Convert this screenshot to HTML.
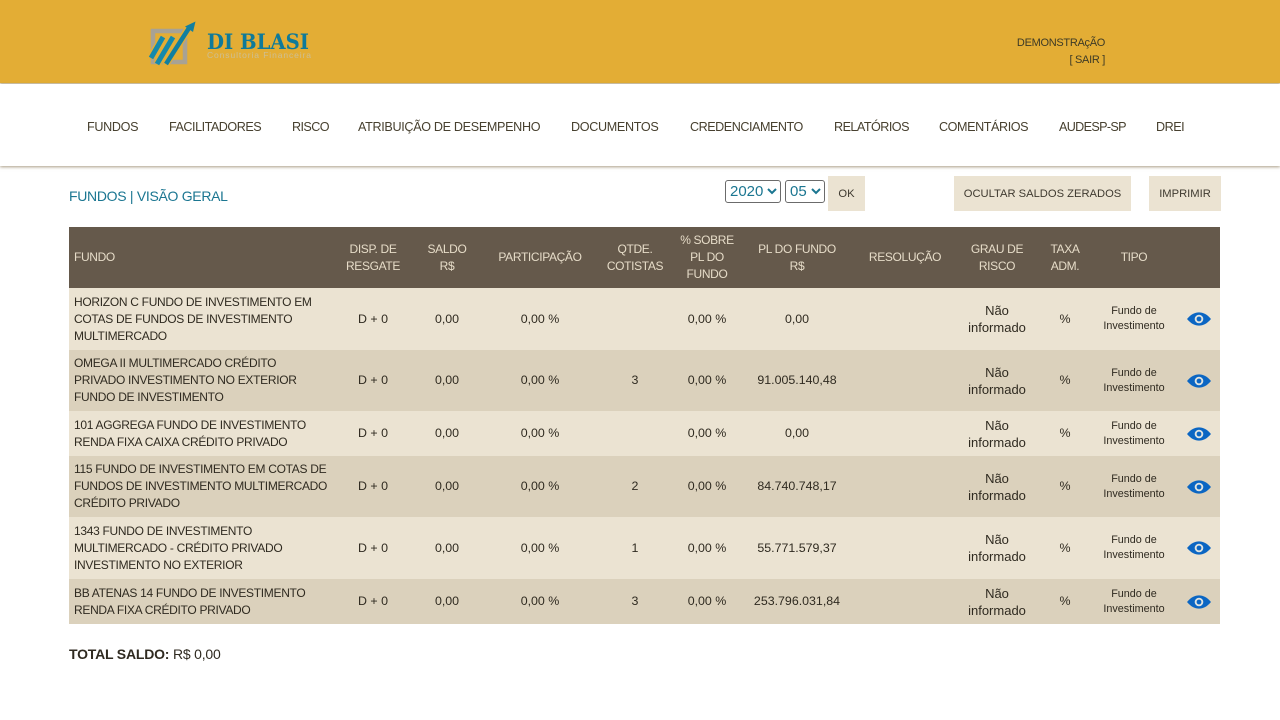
<!DOCTYPE html>
<html lang="pt-BR">
<head>
<meta charset="utf-8">
<title>Fundos</title>
<style>
html,body{margin:0;padding:0;background:#fff;width:1280px;height:720px;overflow:hidden;font-family:"Liberation Sans",sans-serif;color:#2f2a20}
#top{position:absolute;left:0;top:0;width:1280px;height:83px;background:#e3ad35;box-shadow:0 1px 2px rgba(120,90,20,.5)}
#user{position:absolute;right:175px;top:35px;text-align:right;font-size:11px;letter-spacing:-.3px;line-height:17px;color:#3d3a26}
#nav{position:absolute;left:0;top:84px;width:1280px;height:82px;background:#fff;box-shadow:0 1px 3px rgba(110,90,50,.6)}
#nav span{position:absolute;top:34px;font-size:12.6px;letter-spacing:-.33px;line-height:18px;color:#47402f;white-space:nowrap}
#title{position:absolute;left:69px;top:186px;font-size:14px;letter-spacing:-.3px;line-height:20px;color:#1b7691}
select{position:absolute;top:180px;height:23px;font-family:"Liberation Sans",sans-serif;font-size:15px;color:#1b7691;background:#fff;border:1px solid #6b6b6b;border-radius:3px;padding:0}
.btn{position:absolute;top:176px;height:35px;line-height:36px;background:#ebe3d2;color:#3f3a30;font-size:11.2px;text-align:center}
table{position:absolute;left:69px;top:227px;width:1151px;border-collapse:collapse;table-layout:fixed;font-size:12.4px;line-height:17px}
th{background:#65594b;color:#e6dcc8;font-weight:normal;height:61px;padding:0;text-align:center;font-size:12px;letter-spacing:-.35px;line-height:17px}
td{padding:0;text-align:center;color:#2f2a20;white-space:nowrap}
th:first-child,td:first-child{text-align:left;padding-left:5px}
td:first-child{font-size:12px;letter-spacing:-.3px}
tr.a td{background:#ebe3d2}
tr.b td{background:#dbd1bc}
.t{font-size:10.8px;line-height:15px}
.g{font-size:13px}
td svg{display:block;margin:0 0 0 11px}
#total{position:absolute;left:69px;top:644px;font-size:14px;letter-spacing:-.2px;line-height:20px;color:#2f2a20}
</style>
</head>
<body>
<svg width="0" height="0" style="position:absolute"><defs>
<symbol id="eye" viewBox="0 0 24 14"><path d="M0 7C4 2.2 8 .4 12 .4S20 2.2 24 7C20 11.8 16 13.6 12 13.6S4 11.8 0 7Z" fill="#0b66c3"/><circle cx="12" cy="7" r="4.3" fill="#dfe3e0"/><circle cx="12" cy="7" r="2.4" fill="#0b66c3"/></symbol>
</defs></svg>

<div id="top">
<svg style="position:absolute;left:148px;top:20px" width="170" height="46" viewBox="0 0 170 46">
<path d="M5 11H37V42H5Z" fill="none" stroke="#a8a294" stroke-width="4.5"/>
<g fill="none" stroke-linecap="butt">
<path d="M2.5 38L15 17" stroke="#e3ad35" stroke-width="7.5"/>
<path d="M9 44L25 17" stroke="#e3ad35" stroke-width="7.5"/>
<path d="M17 45L42 6" stroke="#e3ad35" stroke-width="7.5"/>
<path d="M3 38L15 17" stroke="#1489ab" stroke-width="5"/>
<path d="M9 44L25 17" stroke="#1489ab" stroke-width="5"/>
<path d="M18 44L41 8" stroke="#127f9f" stroke-width="4.5"/>
</g>
<path d="M47.5 1.5L37 6.5L45 12Z" fill="#127f9f"/>
<text x="59" y="29" font-family="'DejaVu Serif',serif" font-weight="bold" font-size="21" textLength="102" lengthAdjust="spacingAndGlyphs" fill="#0f7a99">DI BLASI</text>
<text x="59" y="38" font-family="'Liberation Sans',sans-serif" font-size="8.5" textLength="104" fill="#cdbf94">Consultoria  Financeira</text>
</svg>
<div id="user">DEMONSTRAçÃO<br>[ SAIR ]</div>
</div>

<div id="nav">
<span style="left:87px">FUNDOS</span>
<span style="left:169px;letter-spacing:-.48px">FACILITADORES</span>
<span style="left:292px;letter-spacing:-.6px">RISCO</span>
<span style="left:358px">ATRIBUIÇÃO DE DESEMPENHO</span>
<span style="left:571px">DOCUMENTOS</span>
<span style="left:690px;letter-spacing:-.47px">CREDENCIAMENTO</span>
<span style="left:834px;letter-spacing:-.53px">RELATÓRIOS</span>
<span style="left:939px;letter-spacing:-.42px">COMENTÁRIOS</span>
<span style="left:1059px;letter-spacing:-.66px">AUDESP-SP</span>
<span style="left:1156px;letter-spacing:-.5px">DREI</span>
</div>

<div id="title">FUNDOS | VISÃO GERAL</div>
<select style="left:725px;width:56px"><option>2020</option></select>
<select style="left:785px;width:40px"><option>05</option></select>
<div class="btn" style="left:828px;width:37px">OK</div>
<div class="btn" style="left:954px;width:177px">OCULTAR SALDOS ZERADOS</div>
<div class="btn" style="left:1149px;width:72px">IMPRIMIR</div>

<table>
<colgroup>
<col style="width:267px"><col style="width:74px"><col style="width:74px"><col style="width:112px"><col style="width:78px"><col style="width:66px"><col style="width:114px"><col style="width:102px"><col style="width:82px"><col style="width:54px"><col style="width:84px"><col style="width:44px">
</colgroup>
<tr><th>FUNDO</th><th>DISP. DE<br>RESGATE</th><th>SALDO<br>R$</th><th>PARTICIPAÇÃO</th><th>QTDE.<br>COTISTAS</th><th>% SOBRE<br>PL DO<br>FUNDO</th><th>PL DO FUNDO<br>R$</th><th>RESOLUÇÃO</th><th>GRAU DE<br>RISCO</th><th>TAXA<br>ADM.</th><th>TIPO</th><th></th></tr>
<tr class="a" style="height:62px"><td>HORIZON C FUNDO DE INVESTIMENTO EM<br>COTAS DE FUNDOS DE INVESTIMENTO<br>MULTIMERCADO</td><td>D + 0</td><td>0,00</td><td>0,00 %</td><td></td><td>0,00 %</td><td>0,00</td><td></td><td class="g">Não<br>informado</td><td>%</td><td class="t">Fundo de<br>Investimento</td><td><svg width="24" height="14"><use href="#eye"/></svg></td></tr>
<tr class="b" style="height:61px"><td>OMEGA II MULTIMERCADO CRÉDITO<br>PRIVADO INVESTIMENTO NO EXTERIOR<br>FUNDO DE INVESTIMENTO</td><td>D + 0</td><td>0,00</td><td>0,00 %</td><td>3</td><td>0,00 %</td><td>91.005.140,48</td><td></td><td class="g">Não<br>informado</td><td>%</td><td class="t">Fundo de<br>Investimento</td><td><svg width="24" height="14"><use href="#eye"/></svg></td></tr>
<tr class="a" style="height:45px"><td>101 AGGREGA FUNDO DE INVESTIMENTO<br>RENDA FIXA CAIXA CRÉDITO PRIVADO</td><td>D + 0</td><td>0,00</td><td>0,00 %</td><td></td><td>0,00 %</td><td>0,00</td><td></td><td class="g">Não<br>informado</td><td>%</td><td class="t">Fundo de<br>Investimento</td><td><svg width="24" height="14"><use href="#eye"/></svg></td></tr>
<tr class="b" style="height:61px"><td>115 FUNDO DE INVESTIMENTO EM COTAS DE<br>FUNDOS DE INVESTIMENTO MULTIMERCADO<br>CRÉDITO PRIVADO</td><td>D + 0</td><td>0,00</td><td>0,00 %</td><td>2</td><td>0,00 %</td><td>84.740.748,17</td><td></td><td class="g">Não<br>informado</td><td>%</td><td class="t">Fundo de<br>Investimento</td><td><svg width="24" height="14"><use href="#eye"/></svg></td></tr>
<tr class="a" style="height:62px"><td>1343 FUNDO DE INVESTIMENTO<br>MULTIMERCADO - CRÉDITO PRIVADO<br>INVESTIMENTO NO EXTERIOR</td><td>D + 0</td><td>0,00</td><td>0,00 %</td><td>1</td><td>0,00 %</td><td>55.771.579,37</td><td></td><td class="g">Não<br>informado</td><td>%</td><td class="t">Fundo de<br>Investimento</td><td><svg width="24" height="14"><use href="#eye"/></svg></td></tr>
<tr class="b" style="height:45px"><td>BB ATENAS 14 FUNDO DE INVESTIMENTO<br>RENDA FIXA CRÉDITO PRIVADO</td><td>D + 0</td><td>0,00</td><td>0,00 %</td><td>3</td><td>0,00 %</td><td>253.796.031,84</td><td></td><td class="g">Não<br>informado</td><td>%</td><td class="t">Fundo de<br>Investimento</td><td><svg width="24" height="14"><use href="#eye"/></svg></td></tr>
</table>

<div id="total"><b>TOTAL SALDO:</b> R$ 0,00</div>
</body>
</html>
